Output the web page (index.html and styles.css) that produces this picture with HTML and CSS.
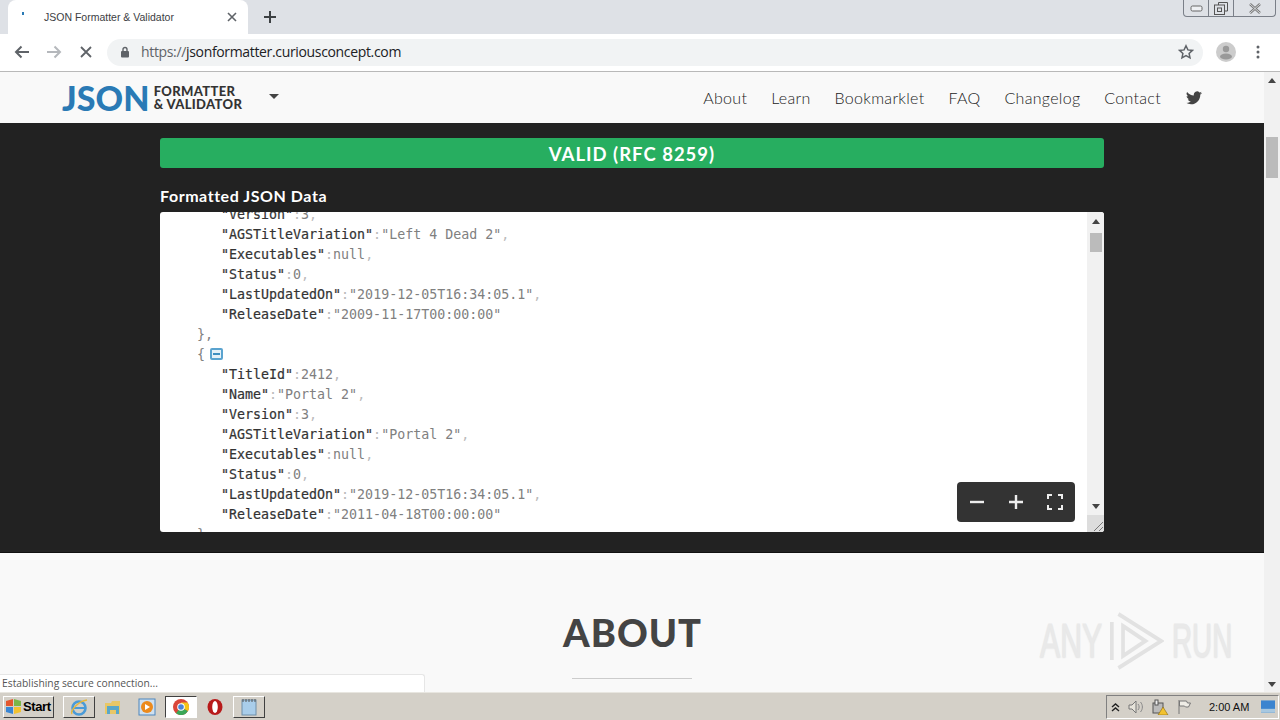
FILE: index.html
```html
<!DOCTYPE html>
<html lang="en">
<head>
<meta charset="utf-8">
<title>JSON Formatter &amp; Validator</title>
<link rel="stylesheet" href="styles.css">
</head>
<body>
<div class="browser">
  <div class="tabstrip">
    <div class="tab">
      <span class="favicon"></span>
      <span class="tab-title">JSON Formatter &amp; Validator</span>
      <svg class="tab-close" width="10" height="10" viewBox="0 0 10 10"><path d="M1 1l8 8M9 1l-8 8" stroke="#5f6368" stroke-width="1.6"/></svg>
    </div>
    <svg class="new-tab" width="14" height="14" viewBox="0 0 14 14"><path d="M7 1v12M1 7h12" stroke="#3c4043" stroke-width="2"/></svg>
    <div class="window-controls">
      <span class="wc wc-min"><svg width="13" height="7" viewBox="0 0 13 7"><rect x="1" y="1" width="11" height="5" rx="1.5" fill="#eef0f3" stroke="#666"/></svg></span>
      <span class="wc wc-max"><svg width="14" height="13" viewBox="0 0 14 13"><path d="M4.500 3V.5h9V9H11" fill="none" stroke="#555"/><rect x=".5" y="3" width="10" height="9.500" fill="none" stroke="#555"/><rect x="3.500" y="6" width="4" height="3.500" fill="none" stroke="#555"/></svg></span>
      <span class="wc wc-close"><svg width="14" height="11" viewBox="0 0 14 11"><path d="M2 1l10 9M12 1L2 10" stroke="#777" stroke-width="2.400"/><path d="M2 1l10 9M12 1L2 10" stroke="#eef0f3" stroke-width=".8"/></svg></span>
    </div>
  </div>
  <div class="toolbar">
    <svg class="tb-icon" width="16" height="14" viewBox="0 0 16 14"><path d="M15 7H2M7.500 1.500L2 7l5.500 5.500" fill="none" stroke="#5f6368" stroke-width="2"/></svg>
    <svg class="tb-icon" width="16" height="14" viewBox="0 0 16 14"><path d="M1 7h13M8.500 1.500L14 7l-5.500 5.500" fill="none" stroke="#b5b8bc" stroke-width="2"/></svg>
    <svg class="tb-icon tb-stop" width="12" height="12" viewBox="0 0 12 12"><path d="M1 1l10 10M11 1L1 11" stroke="#5f6368" stroke-width="1.800"/></svg>
    <div class="omnibox">
      <svg width="10" height="12" viewBox="0 0 10 12"><rect x="1" y="5" width="8" height="6.500" rx="1" fill="#5f6368"/><path d="M3 5.500V3.500a2 2 0 014 0v2" fill="none" stroke="#5f6368" stroke-width="1.400"/></svg>
      <span class="url"><span class="url-dim">https://</span>jsonformatter.curiousconcept.com</span>
      <svg class="star" width="16" height="16" viewBox="0 0 16 16"><path d="M8 1.800l1.900 4.100 4.500.5-3.300 3 .9 4.400L8 11.600l-4 2.200.9-4.400-3.300-3 4.500-.5z" fill="none" stroke="#5f6368" stroke-width="1.500"/></svg>
    </div>
    <svg class="avatar" width="20" height="20" viewBox="0 0 20 20"><circle cx="10" cy="10" r="10" fill="#ccc"/><circle cx="10" cy="7" r="3.200" fill="#999"/><ellipse cx="10" cy="14.500" rx="6" ry="3" fill="#999"/></svg>
    <svg class="menu" width="4" height="14" viewBox="0 0 4 14"><circle cx="2" cy="2" r="1.500" fill="#5f6368"/><circle cx="2" cy="7" r="1.500" fill="#5f6368"/><circle cx="2" cy="12" r="1.500" fill="#5f6368"/></svg>
  </div>
</div>

<div class="viewport">
  <main class="page">
    <header class="site-nav">
      <a class="logo">
        <span class="logo-json">JSON</span>
        <span class="logo-sub"><span>FORMATTER</span><span>&amp; VALIDATOR</span></span>
      </a>
      <span class="caret"></span>
      <nav class="links">
        <a>About</a><a>Learn</a><a>Bookmarklet</a><a>FAQ</a><a>Changelog</a><a>Contact</a>
        <svg class="twitter" width="16" height="14" viewBox="0 0 24 20"><path d="M24 2.400a9.800 9.800 0 01-2.800.8A5 5 0 0023.300.500a9.800 9.800 0 01-3.100 1.200A4.900 4.900 0 0011.800 6.100 14 14 0 011.700.900a4.900 4.900 0 001.500 6.600 4.900 4.900 0 01-2.200-.6c0 2.400 1.700 4.400 3.900 4.900a4.900 4.900 0 01-2.200.1 4.900 4.900 0 004.600 3.400A9.900 9.900 0 010 17.300 14 14 0 007.500 19.500c9.100 0 14.200-7.700 13.900-14.600A10 10 0 0024 2.400z" fill="#444"/></svg>
      </nav>
    </header>

    <section class="results">
      <div class="banner">VALID (RFC 8259)</div>
      <h2 class="results-title">Formatted JSON Data</h2>
      <div class="editor">
        <div class="code">
          <div class="line l2"><b>"Version"</b><i>:</i><u>3</u><i>,</i></div>
          <div class="line l2"><b>"AGSTitleVariation"</b><i>:</i><u>"Left 4 Dead 2"</u><i>,</i></div>
          <div class="line l2"><b>"Executables"</b><i>:</i><u>null</u><i>,</i></div>
          <div class="line l2"><b>"Status"</b><i>:</i><u>0</u><i>,</i></div>
          <div class="line l2"><b>"LastUpdatedOn"</b><i>:</i><u>"2019-12-05T16:34:05.1"</u><i>,</i></div>
          <div class="line l2"><b>"ReleaseDate"</b><i>:</i><u>"2009-11-17T00:00:00"</u></div>
          <div class="line l1"><u>},</u></div>
          <div class="line l1"><u>{</u><span class="collapse"></span></div>
          <div class="line l2"><b>"TitleId"</b><i>:</i><u>2412</u><i>,</i></div>
          <div class="line l2"><b>"Name"</b><i>:</i><u>"Portal 2"</u><i>,</i></div>
          <div class="line l2"><b>"Version"</b><i>:</i><u>3</u><i>,</i></div>
          <div class="line l2"><b>"AGSTitleVariation"</b><i>:</i><u>"Portal 2"</u><i>,</i></div>
          <div class="line l2"><b>"Executables"</b><i>:</i><u>null</u><i>,</i></div>
          <div class="line l2"><b>"Status"</b><i>:</i><u>0</u><i>,</i></div>
          <div class="line l2"><b>"LastUpdatedOn"</b><i>:</i><u>"2019-12-05T16:34:05.1"</u><i>,</i></div>
          <div class="line l2"><b>"ReleaseDate"</b><i>:</i><u>"2011-04-18T00:00:00"</u></div>
          <div class="line l1"><u>},</u></div>
        </div>
        <div class="editor-scroll">
          <span class="arrow-up"></span>
          <span class="editor-thumb"></span>
          <span class="arrow-down spacer-top"></span>
          <span class="resizer"><svg width="12" height="12" viewBox="0 0 12 12"><path d="M2 11l9-9M7 11l4-4" stroke="#777"/></svg></span>
        </div>
        <div class="zoom-tools">
          <svg width="16" height="16" viewBox="0 0 16 16"><path d="M1 8h14" stroke="#eee" stroke-width="2.400"/></svg>
          <svg width="16" height="16" viewBox="0 0 16 16"><path d="M1 8h14M8 1v14" stroke="#eee" stroke-width="2.400"/></svg>
          <svg width="16" height="16" viewBox="0 0 16 16"><path d="M1 5V1h4M11 1h4v4M15 11v4h-4M5 15H1v-4" fill="none" stroke="#eee" stroke-width="2"/></svg>
        </div>
      </div>
    </section>

    <section class="about">
      <h1>ABOUT</h1>
      <hr>
    </section>
  </main>

  <aside class="page-scroll">
    <span class="arrow-up"></span>
    <span class="page-thumb"></span>
    <span class="arrow-down spacer-top"></span>
  </aside>

  <div class="status">Establishing secure connection...</div>
  <div class="watermark">
    <span class="wm-any">ANY</span>
    <svg width="54" height="62" viewBox="0 0 58 62" preserveAspectRatio="none"><path d="M9 4l46 27L9 58M2 12v38M14 16l24 15-24 15z" fill="none" stroke="#e2e2e2" stroke-width="4"/></svg>
    <span class="wm-run">RUN</span>
  </div>
</div>

<footer class="taskbar">
  <button class="start">
    <svg width="17" height="17" viewBox="0 0 17 17"><path d="M1 3l7-2v7H1z" fill="#e4572e"/><path d="M9 1l7 2v5H9z" fill="#7ab648"/><path d="M1 9h7v7l-7-2z" fill="#3a86d4"/><path d="M9 9h7v5l-7 2z" fill="#f2c230"/></svg>
    Start
  </button>
  <span class="task raised task-ie"><svg width="20" height="20" viewBox="0 0 20 20"><circle cx="10" cy="11" r="6.500" fill="none" stroke="#4a9bd8" stroke-width="2.600"/><path d="M5 11h11" stroke="#4a9bd8" stroke-width="2"/><path d="M3 17c-2-3 6-13 15-14" fill="none" stroke="#e8b73a" stroke-width="1.400"/></svg></span>
  <span class="task"><svg width="18" height="18" viewBox="0 0 18 18"><path d="M1 5h6l1-2h8v13H1z" fill="#e9c766"/><path d="M3 8h12v8h-3v-4H6v4H3z" fill="#5aa7c9"/></svg></span>
  <span class="task"><svg width="18" height="18" viewBox="0 0 18 18"><rect x="1" y="1" width="16" height="16" fill="#cfe0ef" stroke="#4c86bd"/><circle cx="9" cy="9" r="6" fill="#ec8a1c"/><path d="M7 6l5 3-5 3z" fill="#fff"/></svg></span>
  <span class="task pressed"><svg width="16" height="16" viewBox="0 0 16 16"><circle cx="8" cy="8" r="8" fill="#d9463a"/><path d="M8 8L15 12A8 8 0 013 14.300z" fill="#3aa757"/><path d="M8 8l7 4A8 8 0 0016 8 8 8 0 0014.500 3.500H8z" fill="#f5c518"/><circle cx="8" cy="8" r="3.800" fill="#fff"/><circle cx="8" cy="8" r="2.800" fill="#4a84d8"/></svg></span>
  <span class="task"><svg width="16" height="18" viewBox="0 0 16 18"><ellipse cx="8" cy="9" rx="7.500" ry="8" fill="#b81a1a"/><ellipse cx="8" cy="9" rx="2.800" ry="6" fill="#fff"/></svg></span>
  <span class="task raised"><svg width="18" height="18" viewBox="0 0 18 18"><rect x="2" y="2" width="14" height="15" fill="#a9cdea" stroke="#6e8ea8"/><path d="M3 1v3M6 1v3M9 1v3M12 1v3M15 1v3" stroke="#555"/></svg></span>
  <div class="tray">
    <svg width="9" height="10" viewBox="0 0 9 10"><path d="M1 5l3.500-3L8 5M1 9l3.500-3L8 9" fill="none" stroke="#222" stroke-width="1.400"/></svg>
    <svg width="16" height="14" viewBox="0 0 16 14"><path d="M1 5h3l4-4v12l-4-4H1z" fill="#e6e3da" stroke="#777"/><path d="M10 4c1.500 2 1.500 4 0 6M12.500 2c2.500 3 2.500 7 0 10" fill="none" stroke="#888"/></svg>
    <svg width="17" height="16" viewBox="0 0 17 16"><rect x="1" y="4" width="10" height="10" fill="#bbb" stroke="#555"/><rect x="3" y="1" width="3" height="5" fill="#eee" stroke="#555"/><path d="M11 8l5 8H6z" fill="#f2c230" stroke="#8a6a10" stroke-width=".6"/></svg>
    <svg width="15" height="15" viewBox="0 0 15 15"><path d="M2 1v14" stroke="#777"/><path d="M2.500 2h7l1 2h3l-2 4h-3l-1-1h-5z" fill="#efede6" stroke="#777"/></svg>
    <span class="clock">2:00 AM</span>
    <svg class="show-desktop" width="14" height="13" viewBox="0 0 15 13"><rect width="15" height="13" fill="#3b84cf"/><rect y="9" width="15" height="4" fill="#a8c8e0"/></svg>
  </div>
</footer>
</body>
</html>
```
FILE: styles.css
```css
* { box-sizing: border-box; }
html, body { margin: 0; height: 100%; overflow: hidden; }
body {
  width: 1280px;
  height: 720px;
  display: flex;
  flex-direction: column;
  font-family: "Liberation Sans", Arial, sans-serif;
  background: #fff;
}

/* Browser chrome */
.browser { flex: none; height: 72px; display: flex; flex-direction: column; }
.tabstrip { height: 34px; background: #dee1e6; display: flex; align-items: flex-end; }
.tab {
  width: 240px; height: 34px; margin-left: 8px; background: #fff;
  border-radius: 8px 8px 0 0; display: flex; align-items: center;
  padding: 0 11px 0 14px; font-size: 10.5px; color: #3c4043;
}
.favicon { width: 2px; height: 3px; background: #2a7ab5; margin-bottom: 8px; flex: none; }
.tab-title { margin-left: 20px; flex: 1; white-space: nowrap; }
.tab-close { flex: none; }
.new-tab { margin: 0 0 10px 15px; }
.window-controls {
  margin: 0 4px auto auto; height: 17px; width: 93px; display: flex;
  border: 1px solid #7a7f88; border-top: 0; border-radius: 0 0 4px 4px;
}
.wc { display: flex; align-items: center; justify-content: center; }
.wc-min { width: 25px; border-right: 1px solid #7a7f88; }
.wc-max { width: 25px; border-right: 1px solid #7a7f88; }
.wc-close { flex: 1; }
.toolbar {
  height: 38px; background: #fff; border-bottom: 1px solid #b9b9b9;
  display: flex; align-items: center; padding: 0 0 1px 14px;
}
.tb-icon { flex: none; margin-right: 16px; }
.tb-stop { margin: 0 16px 0 2px; }
.omnibox {
  width: 1096px; height: 27px; margin-left: -1px; background: #f1f3f4;
  border-radius: 14px; display: flex; align-items: center;
  padding: 0 9px 0 13px; flex: none;
}
.url { margin: -2px 0 0 11px; font-family: "Open Sans", sans-serif; font-size: 14px; color: #202124; letter-spacing: -.34px; }
.url-dim { color: #5f6368; }
.star { margin-left: auto; }
.avatar { margin-left: 13px; flex: none; }
.menu { margin-left: 20px; flex: none; }

/* Page */
.viewport { flex: none; height: 620px; display: flex; position: relative; overflow: hidden; }
.page { width: 1264px; background: #f9f9f9; flex: none; }
.site-nav { height: 51px; display: flex; align-items: center; padding: 0 62px; }
.logo { display: flex; align-items: center; height: 100%; }
.logo-json { font-family: Lato, sans-serif; font-weight: 900; font-size: 34px; color: #2a7ab5; letter-spacing: .1px; line-height: 1; }
.logo-sub { display: flex; flex-direction: column; margin-left: 4px; font-family: Lato, sans-serif; font-weight: 900; font-size: 13px; line-height: 13px; color: #333; letter-spacing: .35px; }
.caret { width: 0; height: 0; margin: 0 0 3px 27px; border: 5px solid transparent; border-top: 5px solid #444; border-bottom: 0; }
.links { margin-left: auto; display: flex; align-items: center; gap: 24px; font-family: Lato, sans-serif; font-weight: 300; font-size: 16px; color: #222; letter-spacing: .3px; }
.twitter { margin: 0 0 0 1px; }

.results { height: 430px; background: #222; padding: 15px 160px 0; border-bottom: 1px solid #111; }
.banner {
  height: 30px; background: #27ae60; border-radius: 3px; color: #fff;
  text-align: center; font: 700 18.5px/32px Lato, sans-serif; letter-spacing: 1px;
}
.results-title { margin: 18px 0 6px; height: 20px; font: 700 16px/20px Lato, sans-serif; color: #fff; letter-spacing: .55px; }
.editor { position: relative; height: 320px; background: #fff; border-radius: 3px; overflow: hidden; }
.code { margin-top: -7px; font-family: "DejaVu Sans Mono", monospace; font-size: 13.3px; line-height: 20px; }
.line { height: 20px; white-space: pre; display: flex; align-items: center; }
.l1 { padding-left: 37px; }
.l2 { padding-left: 61px; }
.line b { font-weight: 400; color: #333; -webkit-text-stroke: .2px #333; }
.line i { font-style: normal; color: #bbb; }
.line u { text-decoration: none; color: #808080; }
.collapse {
  width: 13px; height: 12px; margin: -2px 0 0 5px; border: 2px solid #5aa3cf; border-radius: 2px;
  background: linear-gradient(#3f8fc0, #3f8fc0) center / 7px 2px no-repeat #e6f1f8;
}
.editor-scroll {
  position: absolute; top: 0; right: 0; bottom: 0; width: 17px; background: #f1f1f1;
  display: flex; flex-direction: column; align-items: center; padding-top: 7px;
}
.arrow-up { width: 0; height: 0; border: 4px solid transparent; border-bottom: 5px solid #444; border-top: 0; flex: none; }
.arrow-down { width: 0; height: 0; border: 4px solid transparent; border-top: 5px solid #444; border-bottom: 0; flex: none; }
.editor-thumb { width: 12px; height: 19px; background: #bbb; margin-top: 9px; flex: none; }
.spacer-top { margin-top: auto; }
.editor-scroll .arrow-down { margin-bottom: 23px; }
.resizer { position: absolute; right: 0; bottom: 0; width: 17px; height: 17px; background: #ddd; display: flex; align-items: flex-end; justify-content: flex-end; }
.zoom-tools {
  position: absolute; left: 797px; top: 270px; width: 118px; height: 40px;
  background: #333; border-radius: 4px; display: flex; align-items: center;
  justify-content: space-between; padding: 0 12px;
}

.about { text-align: center; padding-top: 56px; }
.about h1 { margin: 0; font: 900 38px/46px Lato, sans-serif; color: #444; letter-spacing: 1px; text-indent: 1px; }
.about hr { width: 120px; height: 1px; margin: 23px auto 0; border: 0; background: #ccc; }

.page-scroll {
  width: 16px; background: #f1f1f1; display: flex; flex-direction: column;
  align-items: center; padding: 6px 0 5px;
}
.page-thumb { width: 12px; height: 41px; background: #bbb; margin-top: 54px; }

.status {
  position: absolute; left: 0; bottom: 0; width: 425px; height: 18px;
  background: #fff; border: 1px solid #e6e6e6; border-left: 0; border-bottom: 0;
  border-radius: 0 3px 0 0; font: 10.3px/16px "Open Sans", sans-serif; color: #555; padding-left: 2px;
}
.watermark {
  position: absolute; left: 1040px; top: 538px; display: flex; align-items: center; gap: 7px;
  font: 400 48px/62px "Liberation Sans", sans-serif; color: #e9e9e9;
  text-shadow: 0 1px 2px #e2e2e2; -webkit-text-stroke: .8px #e9e9e9;
}
.watermark svg { flex: none; margin-right: 1px; }
.wm-any, .wm-run { display: inline-block; transform-origin: left center; white-space: nowrap; }
.wm-any { width: 63px; transform: scaleX(.63); }
.wm-run { width: 60px; transform: scaleX(.58); }

/* Taskbar */
.taskbar {
  flex: 1; background: #d4d0c8; display: flex; align-items: center;
  padding: 0 1px 0 3px; gap: 2px; border-top: 1px solid #e8e6e0;
}
.start {
  width: 51px; height: 22px; padding: 0 0 0 1px; margin: 0; display: flex; align-items: center; gap: 1px;
  background: #d4d0c8; border: 1px solid; border-color: #fff #404040 #404040 #fff;
  font: 700 13px "Liberation Sans", sans-serif; letter-spacing: -.4px; color: #000;
}
.task { width: 32px; height: 22px; display: flex; align-items: center; justify-content: center; flex: none; }
.raised { border: 1px solid; border-color: #fff #404040 #404040 #fff; }
.pressed { background: #fff; border: 1px solid; border-color: #404040 #fff #fff #404040; }
.task-ie { margin-left: 7px; }
.tray {
  margin-left: auto; width: 173px; height: 24px; display: flex; align-items: center;
  gap: 8px; padding: 0 3px 0 4px; border: 1px solid; border-color: #808080 #fff #fff #808080;
  font: 10.5px "Liberation Sans", sans-serif; color: #111;
}
.clock { margin-left: 9px; white-space: nowrap; font-size: 11px; }
.show-desktop { margin-left: auto; flex: none; }
```
